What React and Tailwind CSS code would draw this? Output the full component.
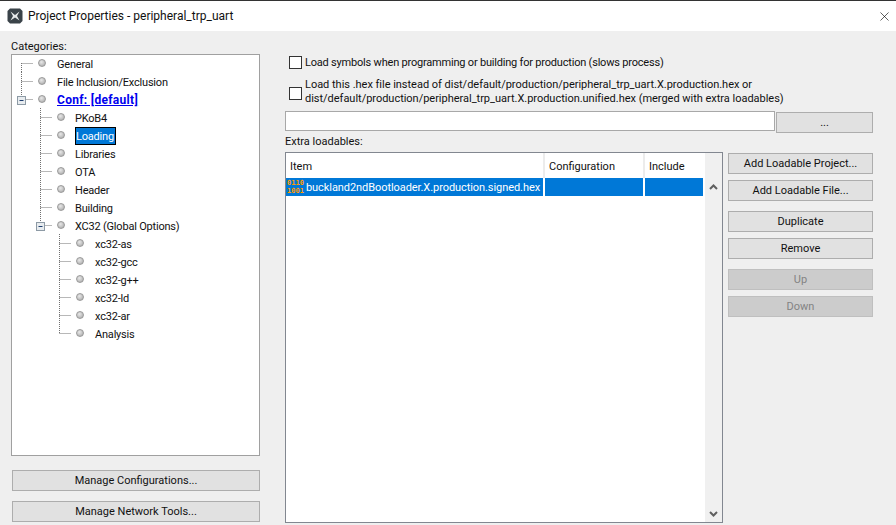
import { X } from 'lucide-react';

const treeRows = [
  { label: 'General', depth: 0 },
  { label: 'File Inclusion/Exclusion', depth: 0 },
  { label: 'Conf: [default]', depth: 0, expander: true, bold: true },
  { label: 'PKoB4', depth: 1 },
  { label: 'Loading', depth: 1, selected: true },
  { label: 'Libraries', depth: 1 },
  { label: 'OTA', depth: 1 },
  { label: 'Header', depth: 1 },
  { label: 'Building', depth: 1 },
  { label: 'XC32 (Global Options)', depth: 1, expander: true, last: true },
  { label: 'xc32-as', depth: 2 },
  { label: 'xc32-gcc', depth: 2 },
  { label: 'xc32-g++', depth: 2 },
  { label: 'xc32-ld', depth: 2 },
  { label: 'xc32-ar', depth: 2 },
  { label: 'Analysis', depth: 2, last: true },
];

// x of the vertical guide for each tree depth, relative to the tree box
const guideX = [9.5, 28.5, 47.5];

const TreeGuides = ({ row, index }) => {
  const x = guideX[row.depth];
  const endsHere = row.last || row.label === 'Conf: [default]';
  return (
    <svg className="absolute left-0 top-0" width="100" height="18" stroke="#707070" strokeDasharray="1 1" fill="none">
      <path d={`M${x} ${index === 0 ? 9 : 0}V${endsHere ? 9 : 18}`} />
      <path d={`M${x} 9.5H${x + 11}`} />
      {row.expander && (
        <g strokeDasharray="none">
          <rect x={x - 4} y="6.5" width="8" height="8" fill="#e8ecef" stroke="#8d9aa5" />
          <path d={`M${x - 2} 10.5H${x + 2}`} stroke="#1f3f6f" />
        </g>
      )}
    </svg>
  );
};

const TreeRow = ({ row, index }) => (
  <div className="relative h-[18px] flex items-center">
    <TreeGuides row={row} index={index} />
    <span
      className={`relative w-[8px] h-[8px] rounded-full border border-[#9a9a9a] bg-[radial-gradient(circle_at_40%_35%,#e8e8e8,#a4a4a4)] ${
        row.depth === 0 ? 'ml-[26px]' : row.depth === 1 ? 'ml-[45px]' : 'ml-[64px]'
      }`}
    ></span>
    {row.selected ? (
      <span className="relative ml-[10px] mt-[2px] h-[18px] w-[41px] pl-[1px] flex items-center bg-[#0078d7] text-white tracking-[-0.2px] outline outline-1 -outline-offset-1 outline-black">
        {row.label}
      </span>
    ) : (
      <span
        className={`relative mt-[2px] ${row.depth === 1 ? 'ml-[10px]' : 'ml-[11px]'} ${
          row.bold ? 'font-bold text-[12px] tracking-[0.3px] text-[#0000ee] underline' : 'text-[#111] tracking-[-0.2px]'
        }`}
      >
        {row.label}
      </span>
    )}
  </div>
);

const Button = ({ children, disabled, className = '' }) => (
  <div
    className={`h-[21px] flex items-center justify-center border ${
      disabled ? 'bg-[#cccccc] border-[#bfbfbf] text-[#838383]' : 'bg-[#e1e1e1] border-[#adadad] text-[#111]'
    } ${className}`}
  >
    {children}
  </div>
);

const Checkbox = () => <div className="w-[13px] h-[13px] shrink-0 border border-[#333] bg-white"></div>;

const TitleIcon = () => (
  <svg width="16" height="16" viewBox="0 0 16 16" className="shrink-0">
    <path d="M3 0.5H13L15.5 3V13L13 15.5H3L0.5 13V3Z" fill="#3a4349" />
    <path d="M3.5 3.5L8 7L12.5 3.5L10 8L12.5 12.5L8 9.5L3.5 12.5L6 8Z" fill="#e6e9ea" />
  </svg>
);

const HexIcon = () => (
  <div className="w-[18px] shrink-0 ml-[1px] font-['DejaVu_Sans_Mono',monospace] text-[7px] leading-[8px] font-bold text-[#ff9a00]">
    <div>0110</div>
    <div>1001</div>
  </div>
);

const App = () => {
  return (
    <div className="w-[896px] h-[525px] overflow-hidden flex flex-col bg-[#efefef] font-['Roboto',sans-serif] text-[11px] leading-none text-[#111]">
      {/* Title bar */}
      <div className="h-[31px] shrink-0 bg-white border-t border-[#333] flex items-center pl-[7px] pr-[4px]">
        <TitleIcon />
        <span className="ml-[5px] text-[12px] flex-1">Project Properties - peripheral_trp_uart</span>
        <X size={15} strokeWidth={1} className="text-black" />
      </div>

      <div className="flex-1 flex min-h-0">
        {/* Categories */}
        <div className="w-[285px] shrink-0 pl-[11px] flex flex-col">
          <div className="h-[23px] flex items-end pb-[2px]">Categories:</div>
          <div className="w-[249px] h-[402px] bg-white border border-[#a0a0a0] shrink-0">
            <div className="-mt-[1px]">
              {treeRows.map((row, index) => (
                <TreeRow key={row.label} row={row} index={index} />
              ))}
            </div>
          </div>
          <Button className="w-[248px] ml-[1px] mt-[14px]">Manage Configurations...</Button>
          <Button className="w-[248px] ml-[1px] mt-[10px]">Manage Network Tools...</Button>
        </div>

        {/* Loading options */}
        <div className="flex-1 flex flex-col min-w-0">
          <div className="flex items-center mt-[25px] ml-[4px] h-[13px]">
            <Checkbox />
            <span className="ml-[3px] tracking-[-0.2px]">Load symbols when programming or building for production (slows process)</span>
          </div>
          <div className="flex items-center mt-[10px] ml-[4px] h-[28px]">
            <Checkbox />
            <span className="ml-[3px] mb-[2px] leading-[14px] tracking-[-0.02px]">
              Load this .hex file instead of dist/default/production/peripheral_trp_uart.X.production.hex or
              <br />
              dist/default/production/peripheral_trp_uart.X.production.unified.hex (merged with extra loadables)
            </span>
          </div>
          <div className="flex mt-[4px] h-[21px]">
            <div className="w-[490px] h-[20px] bg-white border border-[#a8a8a8]"></div>
            <Button className="w-[97px] ml-[1px] mt-[1px]">...</Button>
          </div>
          <div className="h-[20px] flex items-center pb-[2px]">Extra loadables:</div>

          <div className="flex">
            {/* Loadables table */}
            <div className="w-[438px] h-[371px] shrink-0 border border-[#828790] bg-white flex">
              <div className="flex-1 flex flex-col min-w-0">
                <div className="h-[25px] shrink-0 flex items-center">
                  <div className="w-[259px] h-full pl-[4px] pt-[1px] flex items-center border-r-2 border-[#ececec]">Item</div>
                  <div className="w-[100px] h-full pl-[4px] pt-[1px] flex items-center border-r-2 border-[#ececec]">Configuration</div>
                  <div className="flex-1 h-full pl-[4px] pt-[1px] flex items-center">Include</div>
                </div>
                <div className="h-[18px] shrink-0 flex bg-[#0078d7] text-white">
                  <div className="w-[259px] h-full flex items-center border-r-2 border-white">
                    <HexIcon />
                    <span className="ml-[1px] whitespace-nowrap tracking-[-0.07px]">buckland2ndBootloader.X.production.signed.hex</span>
                  </div>
                  <div className="w-[100px] h-full border-r-2 border-white"></div>
                  <div className="flex-1"></div>
                </div>
              </div>
              {/* Scroll track */}
              <div className="w-[17px] ml-[2px] shrink-0 bg-[#f0f0f0] flex flex-col items-center justify-between pt-[31px] pb-[5px]">
                <svg width="9" height="6" fill="none" stroke="#606060" strokeWidth="2">
                  <path d="M1 5L4.5 1.5L8 5" />
                </svg>
                <svg width="9" height="6" fill="none" stroke="#606060" strokeWidth="2">
                  <path d="M1 1L4.5 4.5L8 1" />
                </svg>
              </div>
            </div>

            {/* Table actions */}
            <div className="w-[145px] ml-[5px] pt-[1px] flex flex-col">
              <Button>Add Loadable Project...</Button>
              <Button className="mt-[6px]">Add Loadable File...</Button>
              <Button className="mt-[10px]">Duplicate</Button>
              <Button className="mt-[6px]">Remove</Button>
              <Button disabled className="mt-[10px]">Up</Button>
              <Button disabled className="mt-[6px]">Down</Button>
            </div>
          </div>
        </div>
      </div>
    </div>
  );
};

export default App;
